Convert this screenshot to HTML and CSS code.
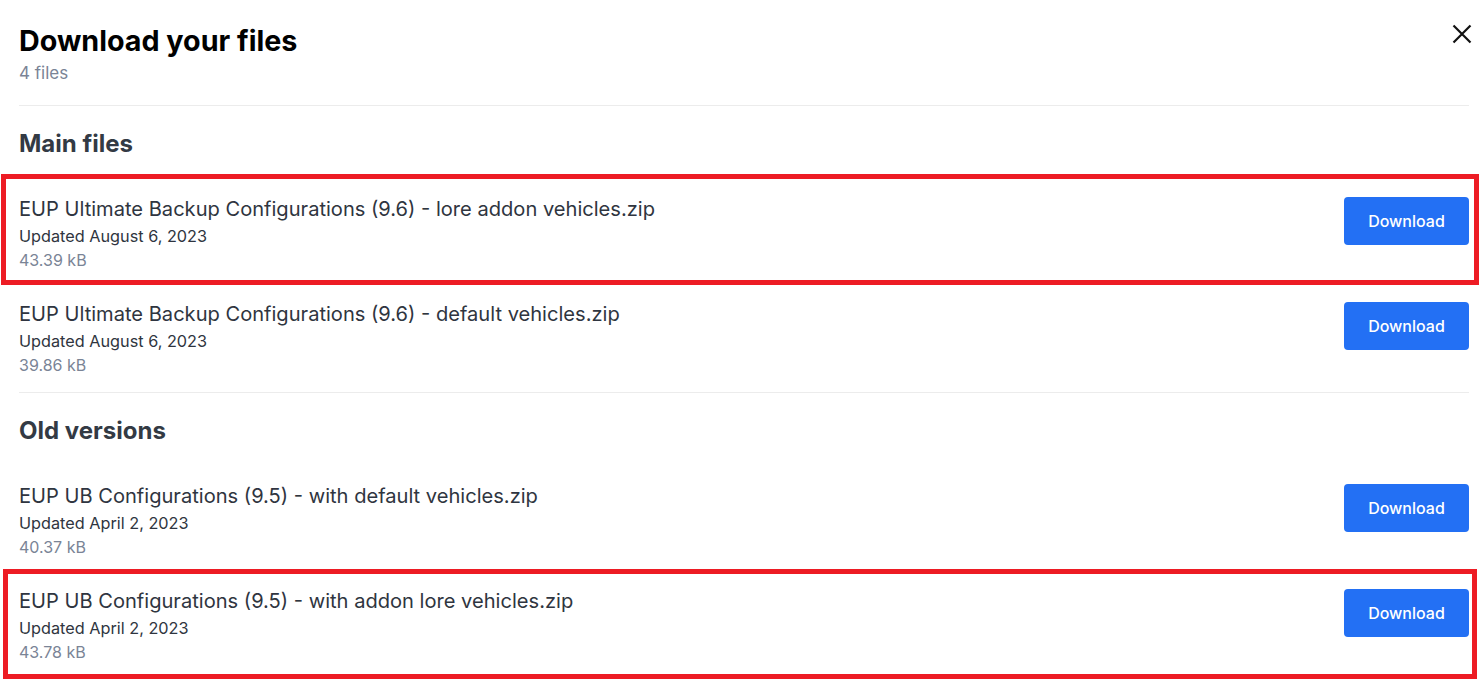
FILE: index.html
```html
<!DOCTYPE html>
<html lang="en">
<head>
<meta charset="utf-8">
<title>Download your files</title>
<link rel="stylesheet" href="styles.css">
</head>
<body>
<div class="modal">
  <header class="header">
    <div class="title-block">
      <h1 class="title">Download your files</h1>
      <div class="count">4 files</div>
    </div>
    <button class="close" aria-label="Close">
      <svg width="20" height="20" viewBox="0 0 20 20"><path d="M1.5 1.5 L18.5 18.5 M18.5 1.5 L1.5 18.5" stroke="#111" stroke-width="2.2" fill="none" stroke-linecap="butt"/></svg>
    </button>
  </header>

  <section class="section">
    <h2 class="section-title">Main files</h2>
    <div class="row">
      <div class="info">
        <div class="name">EUP Ultimate Backup Configurations (9.6) - lore addon vehicles.zip</div>
        <div class="date">Updated August 6, 2023</div>
        <div class="size">43.39 kB</div>
      </div>
      <button class="btn">Download</button>
    </div>
    <div class="row">
      <div class="info">
        <div class="name">EUP Ultimate Backup Configurations (9.6) - default vehicles.zip</div>
        <div class="date">Updated August 6, 2023</div>
        <div class="size">39.86 kB</div>
      </div>
      <button class="btn">Download</button>
    </div>
  </section>

  <section class="section">
    <h2 class="section-title">Old versions</h2>
    <div class="row">
      <div class="info">
        <div class="name">EUP UB Configurations (9.5) - with default vehicles.zip</div>
        <div class="date">Updated April 2, 2023</div>
        <div class="size">40.37 kB</div>
      </div>
      <button class="btn">Download</button>
    </div>
    <div class="row">
      <div class="info">
        <div class="name">EUP UB Configurations (9.5) - with addon lore vehicles.zip</div>
        <div class="date">Updated April 2, 2023</div>
        <div class="size">43.78 kB</div>
      </div>
      <button class="btn">Download</button>
    </div>
  </section>
</div>
<div class="mark mark-1"></div>
<div class="mark mark-2"></div>
</body>
</html>
```

FILE: styles.css
```css
* { box-sizing: border-box; }
html, body {
  margin: 0;
  padding: 0;
  background: #fff;
}
body {
  font-family: Inter, "Noto Sans", "Liberation Sans", sans-serif;
  color: #2f3540;
  position: relative;
  width: 1484px;
  height: 691px;
  overflow: hidden;
}
.modal {
  padding: 23px 15px 0 19px;
}
.header {
  display: flex;
  justify-content: space-between;
  align-items: flex-start;
  padding-bottom: 20px;
  border-bottom: 1px solid #ececec;
}
.title {
  margin: 0;
  font-size: 28.7px;
  line-height: 36px;
  font-weight: 700;
  color: #000;
}
.count {
  margin-top: 2px;
  font-size: 17px;
  line-height: 24px;
  color: #7a8496;
}
.close {
  border: 0;
  background: none;
  padding: 0;
  margin: 1px -3px 0 0;
  width: 20px;
  height: 20px;
  cursor: pointer;
  display: flex;
}
.section {
  padding-top: 24px;
}
.section + .section {
  border-top: 1px solid #ececec;
}
.section-title {
  margin: 0 0 24px 0;
  font-size: 24px;
  line-height: 28px;
  font-weight: 700;
  color: #333a44;
}
.row {
  display: flex;
  justify-content: space-between;
  align-items: flex-start;
  padding: 13px 0 16px 0;
}
.name {
  font-size: 20.1px;
  line-height: 28px;
  color: #2f3540;
}
.date {
  font-size: 16.25px;
  line-height: 26px;
  color: #2f3540;
}
.size {
  font-size: 16px;
  line-height: 22px;
  color: #7a8496;
}
.btn {
  margin-top: 2px;
  width: 125px;
  height: 48px;
  border: 0;
  border-radius: 4px;
  background: #2370f4;
  color: #fff;
  font-family: inherit;
  font-size: 16px;
  font-weight: 500;
  cursor: pointer;
}
.mark {
  position: absolute;
  border: 5px solid #ed1c24;
  pointer-events: none;
}
.mark-1 {
  left: 1px;
  top: 174px;
  width: 1478px;
  height: 111px;
}
.mark-2 {
  left: 3px;
  top: 569px;
  width: 1474px;
  height: 110px;
}
```
